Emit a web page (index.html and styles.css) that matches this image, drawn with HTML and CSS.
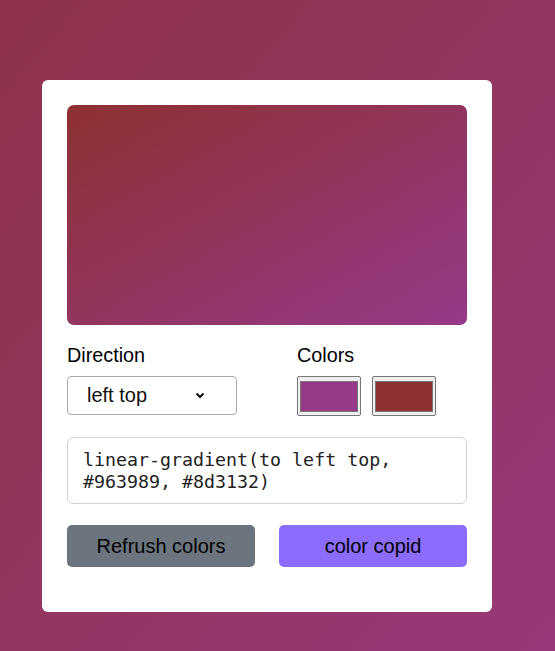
FILE: index.html
```html
<!DOCTYPE html>
<html lang="en">
<head>
<meta charset="utf-8">
<title>Gradient Generator</title>
<link rel="stylesheet" href="styles.css">
</head>
<body>
<div class="card">
  <div class="preview"></div>
  <div class="options">
    <div class="field direction">
      <p class="label">Direction</p>
      <div class="select">
        <span>left top</span>
        <svg class="chev" width="10" height="7" viewBox="0 0 10 7"><path d="M1.5 1.5 L5 5 L8.5 1.5" fill="none" stroke="#111" stroke-width="2"/></svg>
      </div>
    </div>
    <div class="field colors">
      <p class="label">Colors</p>
      <div class="swatches">
        <div class="swatch"><span class="c1"></span></div>
        <div class="swatch"><span class="c2"></span></div>
      </div>
    </div>
  </div>
  <div class="code">linear-gradient(to left top,<br>#963989, #8d3132)</div>
  <div class="buttons">
    <button class="btn refresh">Refrush colors</button>
    <button class="btn copy">color copid</button>
  </div>
</div>
</body>
</html>
```

FILE: styles.css
```css
html, body {
  margin: 0;
  padding: 0;
}
body {
  width: 555px;
  height: 651px;
  background: linear-gradient(to left top, #973878, #8e334a);
  font-family: "Liberation Sans", Arial, sans-serif;
  overflow: hidden;
}
.card {
  box-sizing: border-box;
  width: 450px;
  margin: 80px 0 0 42px;
  height: 532px;
  background: #fff;
  border-radius: 6px;
  padding: 25px;
}
.preview {
  height: 220px;
  border-radius: 7px;
  background: linear-gradient(to left top, #963989, #8d3132);
}
.options {
  display: flex;
  margin-top: 19px;
}
.field .label {
  margin: 0 0 9px;
  font-size: 19.8px;
  color: #000;
  line-height: 23px;
}
.direction {
  width: 230px;
}
.select {
  box-sizing: border-box;
  width: 170px;
  height: 39px;
  border: 1px solid #a9a9a9;
  border-radius: 4px;
  display: flex;
  align-items: center;
  justify-content: space-between;
  padding: 0 31px 0 19px;
  font-size: 20px;
  color: #111;
}
.chev {
  display: block;
}
.swatches {
  display: flex;
  gap: 11px;
}
.swatch {
  box-sizing: border-box;
  width: 64px;
  height: 40px;
  border: 1px solid #767676;
  border-radius: 2px;
  background: #efefef;
  padding: 4px 2px 3px;
}
.swatch span {
  display: block;
  height: 100%;
  border: 1px solid #777;
  box-sizing: border-box;
}
.c1 { background: #963989; }
.c2 { background: #8d3132; }
.code {
  box-sizing: border-box;
  margin-top: 21px;
  height: 67px;
  border: 1px solid #d3d3d3;
  border-radius: 6px;
  padding: 11px 15px;
  font-family: "DejaVu Sans Mono", "Liberation Mono", monospace;
  font-size: 18.3px;
  line-height: 22px;
  color: #222;
}
.buttons {
  display: flex;
  gap: 24px;
  margin-top: 21px;
}
.btn {
  flex: 1;
  height: 42px;
  border: none;
  border-radius: 5px;
  font-family: "Liberation Sans", Arial, sans-serif;
  font-size: 20px;
  color: #000;
}
.refresh { background: #6c757d; }
.copy { background: #8b6cfd; }
```
